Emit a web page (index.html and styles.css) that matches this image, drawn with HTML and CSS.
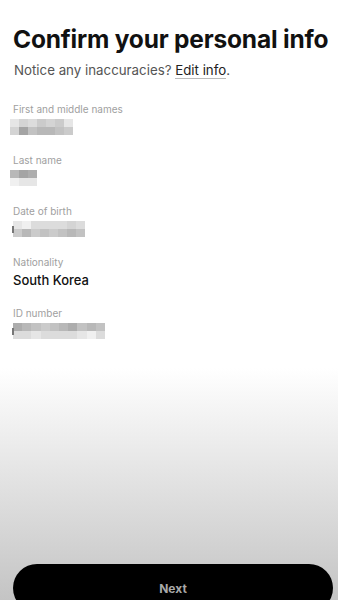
FILE: index.html
```html
<!DOCTYPE html>
<html lang="en">
<head>
    <meta charset="UTF-8">
    <title>Confirm your personal info</title>
    <link rel="stylesheet" href="styles.css">
</head>
<body>
<div class="page">
    <div class="content">
        <h1>Confirm your personal info</h1>
        <p class="intro">Notice any inaccuracies? <a href="#" class="edit">Edit info</a>.</p>

        <div class="field">
            <div class="label">First and middle names</div>
            <div class="blur w7">
                <span class="s8"></span><span class="s6"></span><span class="s7"></span><span class="s5"></span><span class="s6"></span><span class="s5"></span><span class="s8"></span>
                <span class="s6"></span><span class="s1"></span><span class="s4"></span><span class="s3"></span><span class="s3"></span><span class="s4"></span><span class="s5"></span>
            </div>
        </div>

        <div class="field">
            <div class="label">Last name</div>
            <div class="blur w3">
                <span class="s3"></span><span class="s1"></span><span class="s2"></span>
                <span class="s9"></span><span class="s8"></span><span class="s8"></span>
            </div>
        </div>

        <div class="field">
            <div class="label">Date of birth</div>
            <div class="blur w8 cursor">
                <span class="s8"></span><span class="s9"></span><span class="s7"></span><span class="s7"></span><span class="s7"></span><span class="s7"></span><span class="s6"></span><span class="s7"></span>
                <span class="s5"></span><span class="s3"></span><span class="s5"></span><span class="s4"></span><span class="s5"></span><span class="s4"></span><span class="s3"></span><span class="s4"></span>
            </div>
        </div>

        <div class="field">
            <div class="label">Nationality</div>
            <div class="value">South Korea</div>
        </div>

        <div class="field">
            <div class="label">ID number</div>
            <div class="blur w10 cursor">
                <span class="s2"></span><span class="s3"></span><span class="s4"></span><span class="s5"></span><span class="s4"></span><span class="s3"></span><span class="s2"></span><span class="s4"></span><span class="s3"></span><span class="s4"></span>
                <span class="s7"></span><span class="s7"></span><span class="s8"></span><span class="s7"></span><span class="s7"></span><span class="s7"></span><span class="s7"></span><span class="s8"></span><span class="s9"></span><span class="s7"></span>
            </div>
        </div>
    </div>

    <button type="button" class="next">Next</button>
</div>
</body>
</html>
```

FILE: styles.css
```css
html, body {
    height: 600px;
}
body {
    margin: 0;
    overflow: hidden;
    font-family: Inter, "Noto Sans", Arial, sans-serif;
    color: #111;
    background: linear-gradient(to bottom, #fff 0, #fff 368px, #c4c4c4 600px);
}
.page {
    display: flex;
    flex-direction: column;
    min-height: 612px;
}
.content {
    flex: 1;
    padding: 25px 4px 0 13px;
}
h1 {
    margin: 0;
    font-size: 24.5px;
    font-weight: 700;
    letter-spacing: -0.2px;
    line-height: 28px;
    white-space: nowrap;
}
.intro {
    margin: 8px 0 0 1px;
    font-size: 13.3px;
    color: #555;
    line-height: 18px;
}
.edit {
    color: #222;
    text-decoration: none;
    border-bottom: 1px solid #bbb;
}
.field {
    margin-top: 19px;
}
.intro + .field {
    margin-top: 24px;
}
.label {
    font-size: 10px;
    line-height: 12px;
    color: #a0a0a0;
}
.value {
    margin-top: 4px;
    font-size: 13px;
    font-weight: 500;
    line-height: 16px;
}
.blur {
    display: grid;
    grid-auto-rows: 8px;
    margin-top: 4px;
    filter: blur(0.6px);
}
.blur.w7 { grid-template-columns: repeat(7, 9px); margin-left: -3px; }
.blur.w3 { grid-template-columns: repeat(3, 9px); margin-left: -3px; }
.blur.w8 { grid-template-columns: repeat(8, 9px); }
.blur.w10 { grid-template-columns: repeat(10, 9.2px); }
.blur.cursor {
    position: relative;
}
.blur.cursor::before {
    content: "";
    position: absolute;
    left: -1px;
    top: 5px;
    width: 1.5px;
    height: 7px;
    background: #777;
}
.s1 { background: #a4a4a4; }
.s2 { background: #adadad; }
.s3 { background: #b8b8b8; }
.s4 { background: #c2c2c2; }
.s5 { background: #cbcbcb; }
.s6 { background: #d4d4d4; }
.s7 { background: #dcdcdc; }
.s8 { background: #e6e6e6; }
.s9 { background: #f0f0f0; }
.next {
    height: 48px;
    margin: 0 5px 0 13px;
    border: none;
    border-radius: 24px;
    background: #000;
    color: #a8a8a8;
    font-family: Inter, "Noto Sans", Arial, sans-serif;
    font-size: 12px;
    font-weight: 700;
    padding-bottom: 1px;
}
```
